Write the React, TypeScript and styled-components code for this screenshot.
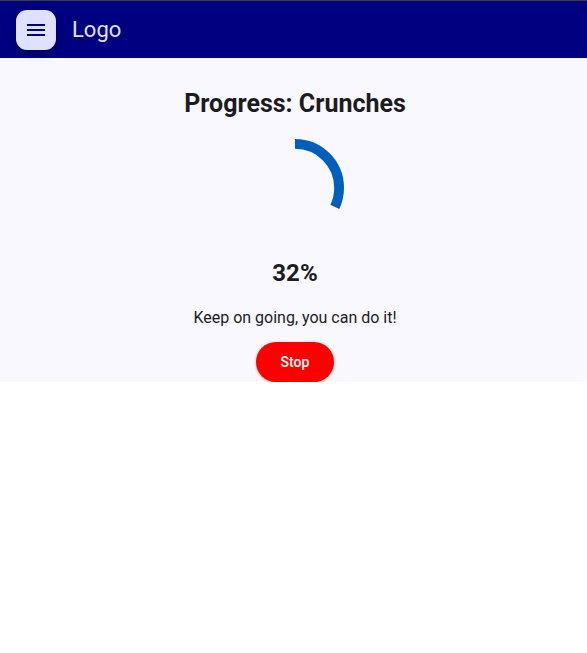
import React from "react";
import styled, { createGlobalStyle } from "styled-components";

const GlobalStyle = createGlobalStyle`
  body {
    margin: 0;
    background: #ffffff;
    font-family: Roboto, "Liberation Sans", sans-serif;
    color: #1c1b1f;
  }
`;

const TopBar = styled.header({
  display: "flex",
  alignItems: "center",
  gap: "16px",
  height: "57px",
  padding: "0 16px",
  borderTop: "1px solid #3a3a3a",
  background: "#000080",
  position: "relative",
  zIndex: 1,
});

const MenuButton = styled.button({
  display: "flex",
  alignItems: "center",
  justifyContent: "center",
  width: "40px",
  height: "40px",
  padding: 0,
  border: "none",
  borderRadius: "11px",
  background: "#e0e0ff",
  boxShadow: "0 4px 10px rgba(0, 0, 0, 0.18)",
  cursor: "pointer",
});

const LogoText = styled.span({
  fontSize: "22px",
  color: "#e0e0ff",
  lineHeight: "26px",
});

const Content = styled.main({
  display: "flex",
  flexDirection: "column",
  alignItems: "center",
  height: "292px",
  padding: "32px 0 0 3px",
  background: "#f8f8fe",
  overflow: "hidden",
});

const Title = styled.h2({
  margin: "0 0 21px",
  fontSize: "25px",
  lineHeight: "28px",
  fontWeight: 700,
});

const Percent = styled.div({
  margin: "22px 0 21px",
  fontSize: "24px",
  lineHeight: "28px",
  fontWeight: 700,
});

const Message = styled.p({
  margin: "0 0 14px",
  fontSize: "16px",
  lineHeight: "20px",
});

const StopButton = styled.button({
  width: "78px",
  height: "40px",
  flexShrink: 0,
  border: "none",
  borderRadius: "20px",
  background: "#ff0000",
  color: "#ffffff",
  fontFamily: "Roboto, sans-serif",
  fontSize: "14px",
  fontWeight: 500,
  boxShadow: "0 1px 3px rgba(0, 0, 0, 0.3)",
  cursor: "pointer",
});

const ProgressArc: React.FC<{ value: number }> = ({ value }) => {
  const r = 45;
  const c = 2 * Math.PI * r;
  return (
    <svg width="100" height="100" viewBox="0 0 100 100">
      <circle
        cx="50"
        cy="50"
        r={r}
        fill="none"
        stroke="#005fbd"
        strokeWidth="10"
        strokeDasharray={`${(c * value) / 100} ${c}`}
        transform="rotate(-90 50 50)"
      />
    </svg>
  );
};

export default function App() {
  const progress = 32;
  return (
    <>
      <GlobalStyle />
      <TopBar>
        <MenuButton aria-label="menu">
          <svg width="24" height="24" viewBox="0 0 24 24" fill="#000080">
            <path d="M3 18h18v-2H3v2zm0-5h18v-2H3v2zm0-7v2h18V6H3z" />
          </svg>
        </MenuButton>
        <LogoText>Logo</LogoText>
      </TopBar>
      <Content>
        <Title>Progress: Crunches</Title>
        <ProgressArc value={progress} />
        <Percent>{progress}%</Percent>
        <Message>Keep on going, you can do it!</Message>
        <StopButton>Stop</StopButton>
      </Content>
    </>
  );
}
